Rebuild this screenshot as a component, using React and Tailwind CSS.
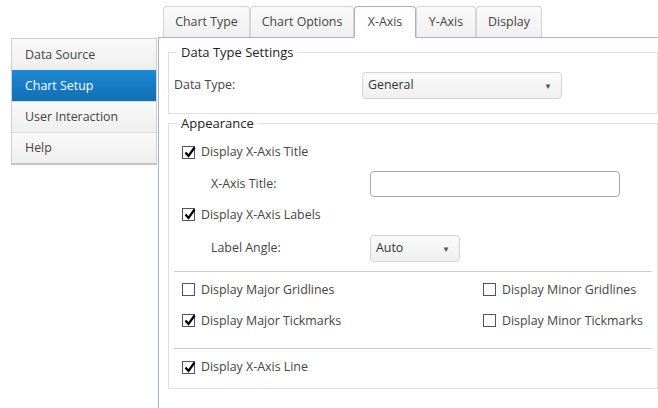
import React from 'react';

const tabs = [
  { label: 'Chart Type', w: 'w-[87px]' },
  { label: 'Chart Options', w: 'w-[104px]' },
  { label: 'X-Axis', w: 'w-[62px]', active: true },
  { label: 'Y-Axis', w: 'w-[60px]' },
  { label: 'Display', w: 'w-[66px]' },
];

const navItems = ['Data Source', 'Chart Setup', 'User Interaction', 'Help'];

const CheckBox = ({ checked }) => (
  <span className="relative inline-block w-[13px] h-[13px] border border-[#555] bg-white shrink-0">
    {checked && (
      <svg className="absolute left-[1px] top-[-1px]" width="12" height="13" viewBox="0 0 12 13">
        <path d="M1.5 6.5 L4.5 10 L10.5 1.5" fill="none" stroke="#000" strokeWidth="2.2" />
      </svg>
    )}
  </span>
);

const Check = ({ checked, label }) => (
  <label className="flex items-center gap-[6px] text-[#444]">
    <CheckBox checked={checked} />
    <span>{label}</span>
  </label>
);

const Select = ({ value, w }) => (
  <div className={`${w} h-[27px] flex items-center justify-between pl-[5px] pr-[9px] border border-[#d4d4d4] rounded-[4px] bg-gradient-to-b from-[#fafafa] to-[#f0f0f0] text-[#333]`}>
    <span>{value}</span>
    <span className="text-[8px] text-[#555]">▼</span>
  </div>
);

export default function App() {
  return (
    <div className="w-[658px] h-[408px] bg-white overflow-hidden flex text-[12.4px] font-['Open_Sans',sans-serif]">
      <div className="w-[158px] shrink-0 pt-[38px] pl-[11px]">
        <div className="w-[146px] border border-[#d0d0d0] border-b-[#c4c4c4] border-b-2">
          {navItems.map((item, i) => (
            <div
              key={item}
              className={
                item === 'Chart Setup'
                  ? 'h-[31px] flex items-center pl-[13px] pt-[1px] text-white bg-gradient-to-b from-[#1c8ad4] to-[#116fb3]'
                  : `h-[31px] flex items-center pl-[13px] pt-[1px] text-[#444] bg-gradient-to-b from-[#f9f9f9] to-[#efefef] ${i > 0 ? 'border-t border-[#dcdcdc]' : ''}`
              }
            >
              {item}
            </div>
          ))}
        </div>
      </div>

      <div className="flex-1 flex flex-col min-w-0">
        <div className="h-[38px] flex items-end pl-[5px] border-b border-[#a6b3c2] shrink-0">
          {tabs.map((t) => (
            <div
              key={t.label}
              className={
                t.active
                  ? `${t.w} h-[32px] -mb-px flex items-center justify-center bg-white border border-[#a6b3c2] border-b-white rounded-t-[4px] text-[#444]`
                  : `${t.w} h-[31px] flex items-center justify-center bg-gradient-to-b from-[#fafafa] to-[#f0f0f0] border border-[#d4d4d4] border-b-0 rounded-t-[4px] text-[#444]`
              }
            >
              {t.label}
            </div>
          ))}
        </div>

        <div className="flex-1 border-l border-[#a6b3c2] pl-[9px] pt-[5px]">
          <fieldset className="border border-[#e0e0e0] px-[5px] pb-[14px]">
            <legend className="ml-[3px] px-[4px] text-[13px] text-[#222] leading-[18px]">Data Type Settings</legend>
            <div className="flex items-center mt-[11px]">
              <span className="w-[188px] text-[#444]">Data Type:</span>
              <Select value="General" w="w-[200px]" />
            </div>
          </fieldset>

          <fieldset className="border border-[#e0e0e0] px-[5px] pb-[2px]">
            <legend className="ml-[3px] px-[4px] text-[13px] text-[#222] leading-[18px]">Appearance</legend>
            <div className="pl-[8px] pt-[5px]">
              <div className="h-[31px] flex items-center">
                <Check checked label="Display X-Axis Title" />
              </div>
              <div className="h-[32px] flex items-center">
                <span className="w-[188px] pl-[29px] text-[#444]">X-Axis Title:</span>
                <div className="w-[250px] h-[26px] border border-[#aaa] rounded-[4px] bg-white" />
              </div>
              <div className="h-[30px] flex items-center">
                <Check checked label="Display X-Axis Labels" />
              </div>
              <div className="h-[37px] flex items-center">
                <span className="w-[188px] pl-[29px] text-[#444]">Label Angle:</span>
                <Select value="Auto" w="w-[90px]" />
              </div>
            </div>
            <div className="h-px bg-[#cccccc] mt-[4px]" />
            <div className="pl-[8px]">
              <div className="h-[36px] flex items-center">
                <div className="w-[301px]"><Check label="Display Major Gridlines" /></div>
                <Check label="Display Minor Gridlines" />
              </div>
              <div className="h-[26px] flex items-center">
                <div className="w-[301px]"><Check checked label="Display Major Tickmarks" /></div>
                <Check label="Display Minor Tickmarks" />
              </div>
            </div>
            <div className="h-px bg-[#cccccc] mt-[14px]" />
            <div className="pl-[8px]">
              <div className="h-[37px] flex items-center">
                <Check checked label="Display X-Axis Line" />
              </div>
            </div>
          </fieldset>
        </div>
      </div>
    </div>
  );
}
